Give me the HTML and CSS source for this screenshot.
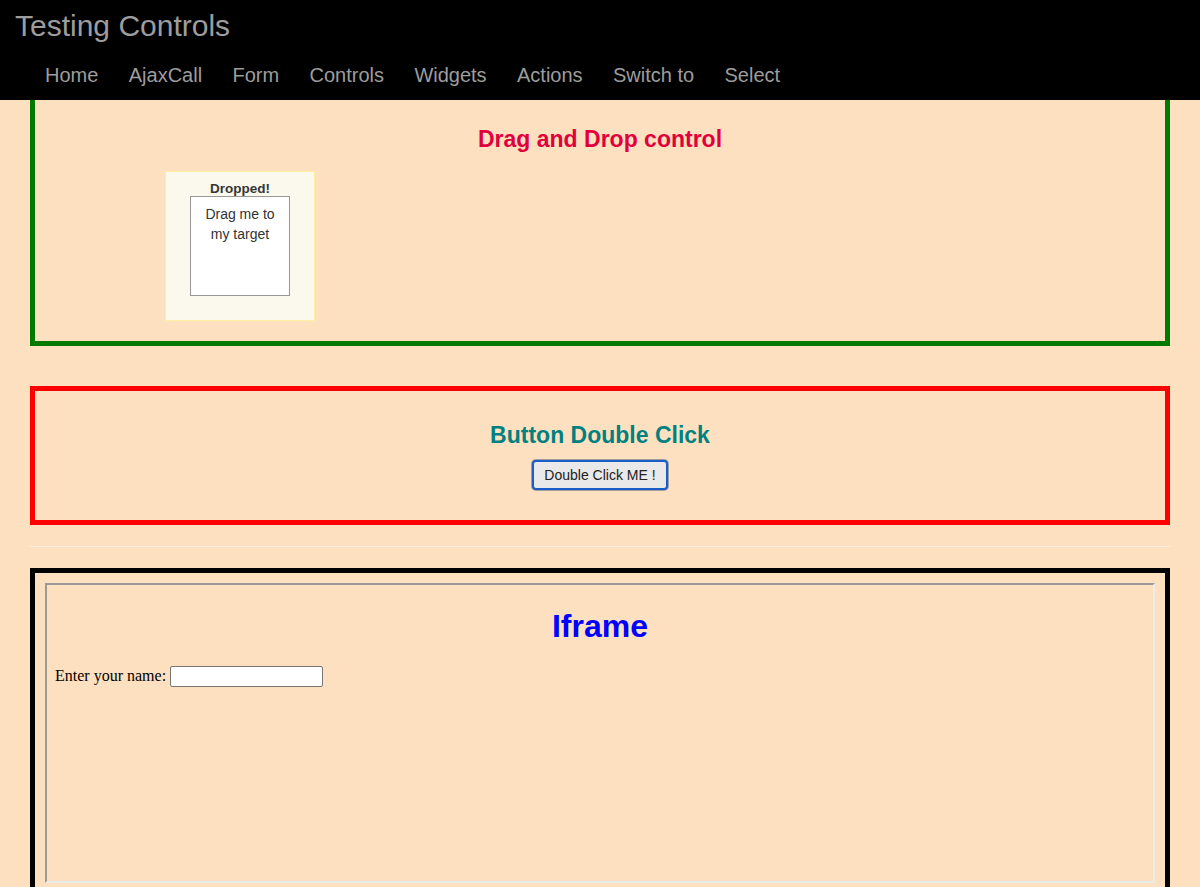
FILE: index.html
```html
<!DOCTYPE html>
<html lang="en">
<head>
<meta charset="utf-8">
<title>Testing Controls</title>
<link rel="stylesheet" href="styles.css">
</head>
<body>
<header class="topbar">
  <div class="brand">Testing Controls</div>
  <nav class="nav">
    <a class="nav-link">Home</a>
    <a class="nav-link">AjaxCall</a>
    <a class="nav-link">Form</a>
    <a class="nav-link">Controls</a>
    <a class="nav-link">Widgets</a>
    <a class="nav-link">Actions</a>
    <a class="nav-link">Switch to</a>
    <a class="nav-link">Select</a>
  </nav>
</header>
<main class="page">
  <section class="panel panel-green">
    <h3 class="panel-title title-crimson">Drag and Drop control</h3>
    <div class="drop-zone">
      <p class="drop-label">Dropped!</p>
      <div class="drag-box">Drag me to my target</div>
    </div>
  </section>
  <section class="panel panel-red">
    <h3 class="panel-title title-teal">Button Double Click</h3>
    <div class="btn-row">
      <button class="dbl-btn" type="button">Double Click ME !</button>
    </div>
  </section>
  <hr class="divider">
  <section class="panel panel-black">
    <div class="frame">
      <h1 class="frame-title">Iframe</h1>
      <div class="frame-row">
        <span class="frame-label">Enter your name:</span>
        <input class="frame-input" type="text">
      </div>
    </div>
  </section>
</main>
</body>
</html>
```

FILE: styles.css
```css
html, body {
  margin: 0;
  padding: 0;
}
body {
  background: #fde0bf;
  font-family: "Liberation Sans", Arial, sans-serif;
  overflow: hidden;
}
.topbar {
  position: fixed;
  top: 0;
  left: 0;
  right: 0;
  height: 100px;
  background: #000;
  z-index: 10;
  display: flex;
  flex-direction: column;
}
.brand {
  padding: 8px 15px 0;
  font-size: 30px;
  line-height: 36px;
  color: #9d9d9d;
}
.nav {
  display: flex;
  margin-left: 30px;
}
.nav-link {
  padding: 20px 15.2px 14px;
  font-size: 20px;
  line-height: 22px;
  color: #9d9d9d;
}
.nav-link:first-child {
  padding-left: 15px;
}
.page {
  padding: 90px 30px 0;
}
.panel {
  border: 5px solid;
  display: flex;
  flex-direction: column;
}
.panel-green {
  border-color: #007a00;
  padding: 31px 0 20px;
}
.panel-red {
  border-color: #ff0000;
  margin-top: 40px;
  padding: 31px 0 30px;
}
.panel-black {
  border-color: #000;
  padding: 10px;
  height: 340px;
}
.panel-title {
  margin: 0;
  text-align: center;
  font-size: 23px;
  line-height: 26px;
  font-weight: bold;
}
.title-crimson { color: #e0003c; }
.title-teal { color: #008080; }
.drop-zone {
  box-sizing: border-box;
  width: 150px;
  height: 150px;
  margin: 19px 0 0 130px;
  padding-top: 10px;
  background: #fbf9ee;
  border: 1px solid #fcefa1;
  color: #363636;
  display: flex;
  flex-direction: column;
  align-items: center;
}
.drop-label {
  margin: 0;
  font-size: 13.5px;
  line-height: 14px;
  font-weight: bold;
}
.drag-box {
  box-sizing: border-box;
  width: 100px;
  height: 100px;
  padding: 7px 7px 0;
  background: #fff;
  border: 1px solid #999;
  color: #333;
  font-size: 14px;
  line-height: 20px;
  text-align: center;
}
.btn-row {
  display: flex;
  justify-content: center;
  margin-top: 12px;
}
.dbl-btn {
  box-sizing: border-box;
  height: 30px;
  padding: 0 10px;
  border: 2px solid #1a5cc8;
  border-radius: 4px;
  box-shadow: 0 0 0 1px #a0a0a0;
  background: #e9e9e9;
  color: #222;
  font-family: "Liberation Sans", Arial, sans-serif;
  font-size: 14px;
  line-height: 17px;
}
.divider {
  margin: 21px 0;
  border: 0;
  border-top: 1px solid #fbefe2;
  height: 0;
}
.frame {
  box-sizing: border-box;
  height: 300px;
  border: 2px solid;
  border-color: #9a9a9a #ececec #ececec #9a9a9a;
  padding: 0 8px;
}
.frame-title {
  margin: 22.5px 0 20.5px;
  text-align: center;
  font-family: "Liberation Sans", Arial, sans-serif;
  font-size: 32px;
  line-height: 37px;
  font-weight: bold;
  color: #0000ff;
}
.frame-row {
  display: flex;
  align-items: center;
  gap: 4px;
  height: 22px;
  font-family: "Liberation Serif", "Times New Roman", serif;
  font-size: 16px;
  color: #000;
}
.frame-input {
  box-sizing: border-box;
  width: 153px;
  height: 21px;
  margin: 0;
  border: 1px solid #767676;
  border-radius: 2px;
  background: #fff;
  padding: 1px 2px;
}
```
